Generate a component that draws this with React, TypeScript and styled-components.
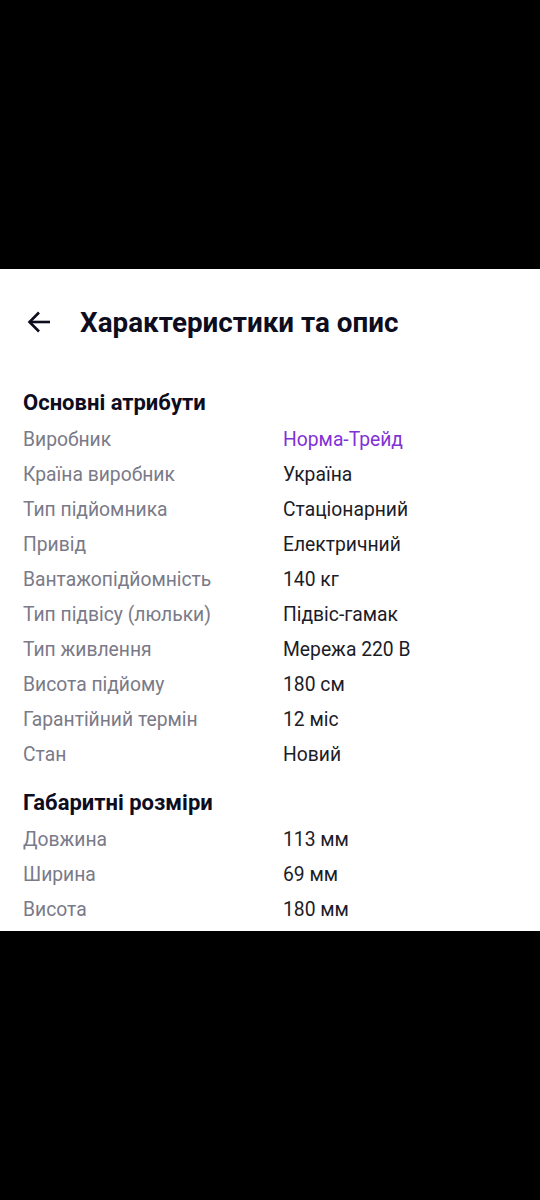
import React from 'react';
import styled, { createGlobalStyle } from 'styled-components';

const GlobalStyle = createGlobalStyle`
  html, body {
    margin: 0;
    padding: 0;
    background: #000;
  }
  body {
    font-family: Roboto, 'Noto Sans', sans-serif;
    -webkit-font-smoothing: antialiased;
  }
`;

interface Attribute {
  label: string;
  value: string;
  link?: boolean;
}

interface Section {
  title: string;
  items: Attribute[];
}

const sections: Section[] = [
  {
    title: 'Основні атрибути',
    items: [
      { label: 'Виробник', value: 'Норма-Трейд', link: true },
      { label: 'Країна виробник', value: 'Україна' },
      { label: 'Тип підйомника', value: 'Стаціонарний' },
      { label: 'Привід', value: 'Електричний' },
      { label: 'Вантажопідйомність', value: '140 кг' },
      { label: 'Тип підвісу (люльки)', value: 'Підвіс-гамак' },
      { label: 'Тип живлення', value: 'Мережа 220 В' },
      { label: 'Висота підйому', value: '180 см' },
      { label: 'Гарантійний термін', value: '12 міс' },
      { label: 'Стан', value: 'Новий' },
    ],
  },
  {
    title: 'Габаритні розміри',
    items: [
      { label: 'Довжина', value: '113 мм' },
      { label: 'Ширина', value: '69 мм' },
      { label: 'Висота', value: '180 мм' },
    ],
  },
];

const Screen = styled.div`
  width: 540px;
  height: 1200px;
  background: #000;
  padding-top: 269px;
  box-sizing: border-box;
`;

const Sheet = styled.div`
  background: #fff;
  height: 662px;
  box-sizing: border-box;
  padding-bottom: 4px;
`;

const Header = styled.div`
  height: 106px;
  display: flex;
  align-items: center;
  padding-left: 25px;
  margin-bottom: 10px;
`;

const BackButton = styled.button`
  width: 28px;
  height: 28px;
  padding: 0;
  border: none;
  background: none;
  display: flex;
  align-items: center;
  justify-content: center;
  margin-right: 27px;
  color: #0d0d1e;
`;

const Title = styled.h1`
  margin: 0;
  font-size: 27.8px;
  font-weight: 700;
  color: #0d0d1e;
`;

const SectionBlock = styled.section`
  padding: 0 23px;

  & + & {
    margin-top: 14px;
  }
`;

const SectionTitle = styled.h2`
  margin: 0;
  height: 36px;
  line-height: 36px;
  font-size: 22px;
  font-weight: 700;
  color: #0d0d1e;
`;

const Row = styled.div`
  display: grid;
  grid-template-columns: 260px 1fr;
  height: 35px;
  box-sizing: border-box;
  padding-top: 2px;
  align-items: center;
  font-size: 19.3px;
`;

const Label = styled.span`
  color: #7a7a88;
`;

const Value = styled.span<{ $link?: boolean }>`
  color: ${props => (props.$link ? '#8132d6' : '#1c1c28')};
`;

const ArrowIcon = () => (
  <svg width="28" height="28" viewBox="0 0 28 28" fill="none" stroke="currentColor" strokeWidth="2.6">
    <path d="M25 14H5" />
    <path d="M14 4.5L4.5 14 14 23.5" strokeLinejoin="miter" />
  </svg>
);

const App: React.FC = () => (
  <Screen>
    <GlobalStyle />
    <Sheet>
      <Header>
        <BackButton aria-label="Назад">
          <ArrowIcon />
        </BackButton>
        <Title>Характеристики та опис</Title>
      </Header>
      {sections.map(section => (
        <SectionBlock key={section.title}>
          <SectionTitle>{section.title}</SectionTitle>
          {section.items.map(item => (
            <Row key={item.label}>
              <Label>{item.label}</Label>
              <Value $link={item.link}>{item.value}</Value>
            </Row>
          ))}
        </SectionBlock>
      ))}
    </Sheet>
  </Screen>
);

export default App;
